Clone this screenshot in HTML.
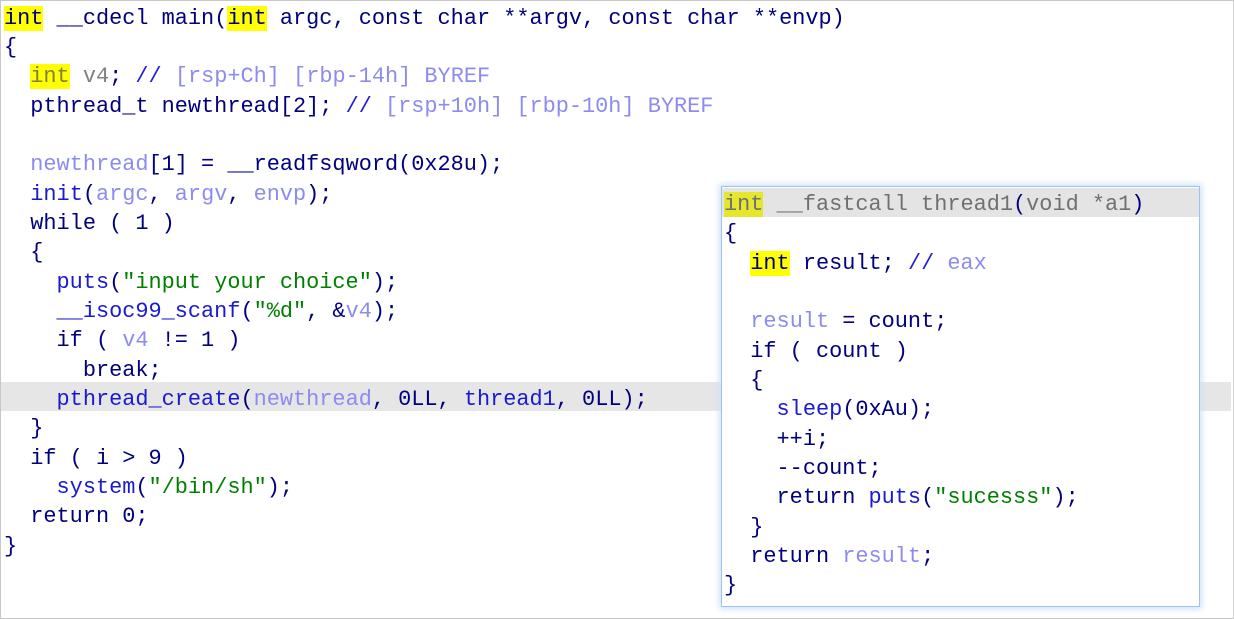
<!DOCTYPE html>
<html><head><style>
body{margin:0;width:1234px;height:619px;background:#fff;overflow:hidden;position:relative;font-family:"Liberation Mono",monospace;font-size:21.9px;}
.frame{position:absolute;left:0;top:0;width:1232px;height:617px;border:1px solid #c8c8c8;border-right:1px solid #d0d0d0;}
pre{margin:0;font:inherit;line-height:29.35px;color:#000080;white-space:pre;}
#main{position:absolute;left:4px;top:3.5px;}
.hl{position:absolute;left:1px;top:382px;width:1230px;height:29px;background:#e6e6e6;}
.y{background:#ffff00;}
.v{color:#8c8cf0;}
.f{color:#1a1ad0;}
.s{color:#008000;}
.c{color:#2020d0;}
.cm{color:#8c8cf0;}
.g{color:#808080;}
#pop{position:absolute;left:721px;top:186px;width:477px;height:419px;background:#fff;border:1px solid #9cc3ee;box-shadow:0 0 6px 2px #cfe2f8;}
#pop .hd{position:absolute;left:0;top:1px;width:477px;height:29px;background:#e4e4e4;}
#pop pre{position:absolute;left:2px;top:3px;}
</style></head><body>
<div class="frame"></div>
<div class="hl"></div>
<pre id="main"><span class="y">int</span> __cdecl main(<span class="y">int</span> argc, const char **argv, const char **envp)
{
  <span class="y" style="color:#808040">int</span> <span class="g">v4</span>; <span class="c">//</span> <span class="cm">[rsp+Ch] [rbp-14h] BYREF</span>
  pthread_t newthread[2]; <span class="c">//</span> <span class="cm">[rsp+10h] [rbp-10h] BYREF</span>

  <span class="v">newthread</span>[1] = __readfsqword(0x28u);
  <span class="f">init</span>(<span class="v">argc</span>, <span class="v">argv</span>, <span class="v">envp</span>);
  while ( 1 )
  {
    <span class="f">puts</span>(<span class="s">"input your choice"</span>);
    <span class="f">__isoc99_scanf</span>(<span class="s">"%d"</span>, &amp;<span class="v">v4</span>);
    if ( <span class="v">v4</span> != 1 )
      break;
    <span class="f">pthread_create</span>(<span class="v">newthread</span>, 0LL, <span class="f">thread1</span>, 0LL);
  }
  if ( i &gt; 9 )
    <span class="f">system</span>(<span class="s">"/bin/sh"</span>);
  return 0;
}</pre>
<div id="pop"><div class="hd"></div>
<pre><span style="background:#e6e62e;color:#707070">int</span><span style="color:#707070"> __fastcall thread1</span>(<span style="color:#707070">void *a1</span>)
{
  <span class="y">int</span> result; <span class="c">//</span> <span class="cm">eax</span>

  <span class="v">result</span> = count;
  if ( count )
  {
    <span class="f">sleep</span>(0xAu);
    ++i;
    --count;
    return <span class="f">puts</span>(<span class="s">"sucesss"</span>);
  }
  return <span class="v">result</span>;
}</pre></div>
</body></html>
